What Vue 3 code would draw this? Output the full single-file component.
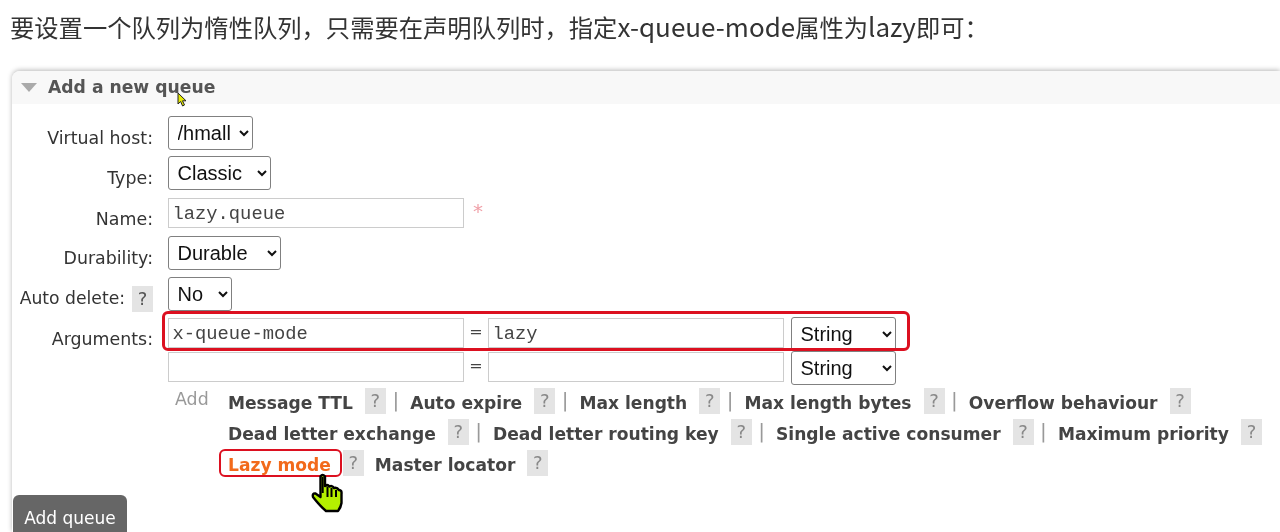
<script setup>
const linkLines = [
  [
    { t: 'Message TTL', sep: true },
    { t: 'Auto expire', sep: true },
    { t: 'Max length', sep: true },
    { t: 'Max length bytes', sep: true },
    { t: 'Overflow behaviour' }
  ],
  [
    { t: 'Dead letter exchange', sep: true },
    { t: 'Dead letter routing key', sep: true },
    { t: 'Single active consumer', sep: true },
    { t: 'Maximum priority' }
  ],
  [
    { t: 'Lazy mode', active: true },
    { t: 'Master locator' }
  ]
]
</script>

<template>
  <div class="page">
    <p class="intro">要设置一个队列为惰性队列，只需要在声明队列时，指定<span class="lat">x-queue-mode</span>属性为<span class="lat">lazy</span>即可：</p>
    <section class="panel">
      <header class="head">
        <span class="tri"></span>
        <h2>Add a new queue</h2>
      </header>
      <form class="form" @submit.prevent>
        <label class="lbl">Virtual host:</label>
        <div><select class="sel w-vh"><option>/hmall</option></select></div>

        <label class="lbl">Type:</label>
        <div><select class="sel w-type"><option>Classic</option></select></div>

        <label class="lbl lbl-in">Name:</label>
        <div class="field">
          <input class="inp" value="lazy.queue" />
          <span class="star">*</span>
        </div>

        <label class="lbl">Durability:</label>
        <div><select class="sel w-dur"><option>Durable</option></select></div>

        <label class="lbl lbl-auto">Auto delete:<span class="q q-auto">?</span></label>
        <div><select class="sel w-no"><option>No</option></select></div>

        <label class="lbl lbl-in">Arguments:</label>
        <div class="args">
          <input class="inp" value="x-queue-mode" />
          <span class="eq">=</span>
          <input class="inp" value="lazy" />
          <select class="sel w-str"><option>String</option></select>
          <span class="redbox"></span>
        </div>

        <span></span>
        <div class="args">
          <input class="inp" />
          <span class="eq">=</span>
          <input class="inp" />
          <select class="sel w-str"><option>String</option></select>
        </div>

        <span></span>
        <div class="adds">
          <span class="add">Add</span>
          <div class="lines">
            <div v-for="(line, i) in linkLines" :key="i" class="line">
              <template v-for="item in line" :key="item.t">
                <span class="link" :class="{ active: item.active }">{{ item.t }}<span v-if="item.active" class="redmini"></span></span>
                <span class="q">?</span>
                <span v-if="item.sep" class="sep">|</span>
              </template>
            </div>
            <svg class="hand" viewBox="0 0 32 40" width="32" height="40">
              <path d="M9.5 24V3.5Q11.5 .5 14 3.5V13Q16.5 11 18.5 13.5Q21 12 23 15Q26 14 28 17Q31 17 30.5 21V30Q30 34 27 38H15Q9 33 2 24Q1 20 4.5 20.5Z" fill="#b4f000" stroke="#000" stroke-width="2.4" stroke-linejoin="round"/>
              <path d="M11.7 4V20M16.500 14V24M20.500 15V24M25 17V24" stroke="#000" stroke-width="2" fill="none"/>
            </svg>
          </div>
        </div>
      </form>
      <button class="submit" type="button">Add queue</button>
      <svg class="arrow" viewBox="0 0 11 15" width="11" height="15">
        <path d="M1 1V12L3.600 9.500L5.600 14L7.500 13L5.500 8.800H9Z" fill="#e4e800" stroke="#222" stroke-width="1"/>
      </svg>
    </section>
  </div>
</template>

<style scoped>
.page {
  position: relative;
  width: 1280px;
  height: 532px;
  overflow: hidden;
  background: #fff;
  filter: blur(0.35px);
}
.intro {
  margin: 0;
  padding: 9px 0 0 10px;
  height: 71px;
  box-sizing: border-box;
  font: 24.3px/34px "Noto Sans CJK SC", "Noto Sans", sans-serif;
  color: #333;
  white-space: nowrap;
}
.lat {
  font-size: 26px;
}
.panel {
  position: relative;
  margin-left: 12px;
  height: 461px;
  border-radius: 8px 0 0 0;
  box-shadow: 0 -1px 5px rgba(0, 0, 0, 0.28);
  background: #fff;
}
.head {
  display: flex;
  align-items: center;
  height: 33px;
  padding-left: 9px;
  background: #f8f8f8;
  border-radius: 8px 0 0 0;
}
.tri {
  width: 0;
  height: 0;
  border-left: 8px solid transparent;
  border-right: 8px solid transparent;
  border-top: 9px solid #aaa;
  margin-right: 11px;
}
h2 {
  margin: 0;
  font: bold 17.2px/1 "DejaVu Sans", sans-serif;
  color: #555;
}
.form {
  display: grid;
  grid-template-columns: 141px 1fr;
  grid-template-rows: 40px 42px 38px 41px 41px 34px 36px auto;
  column-gap: 15px;
  margin-top: 12px;
  font-family: "DejaVu Sans", sans-serif;
}
.lbl {
  font-size: 17.4px;
  line-height: 20px;
  color: #333;
  text-align: right;
  padding-top: 12px;
  white-space: nowrap;
}
.lbl-in {
  padding-top: 11px;
}
.lbl-auto {
  display: flex;
  justify-content: flex-end;
  align-items: flex-start;
  gap: 7px;
  padding-top: 11px;
  font-size: 17.2px;
}
.sel {
  display: block;
  box-sizing: border-box;
  height: 34px;
  padding: 0 2px 0 4.5px;
  font: 20px "Liberation Sans", sans-serif;
  color: #111;
  background: #fff;
  border: 1px solid #808080;
  border-radius: 3px;
}
.w-vh { width: 85px; }
.w-type { width: 103px; }
.w-dur { width: 113px; }
.w-no { width: 64px; }
.w-str { width: 105px; margin-left: 7px; margin-top: -1px; }
.inp {
  display: block;
  box-sizing: border-box;
  width: 296px;
  height: 30px;
  padding: 1px 3.5px 0;
  border: 1px solid #ccc;
  font: 18.8px "Liberation Mono", monospace;
  color: #444;
  background: #fff;
}
.field, .args {
  position: relative;
  display: flex;
  align-items: flex-start;
}
.star {
  margin-left: 9px;
  padding-top: 2px;
  font: 20px/22px "DejaVu Sans", sans-serif;
  color: #f0a0a8;
}
.eq {
  width: 24px;
  text-align: center;
  font-size: 16px;
  line-height: 28px;
  color: #444;
}
.redbox {
  position: absolute;
  left: -6px;
  top: -7px;
  width: 748px;
  height: 40px;
  box-sizing: border-box;
  border: 3px solid #dc1020;
  border-radius: 6px;
}
.adds {
  display: flex;
}
.add {
  width: 60px;
  padding: 0 0 0 7px;
  box-sizing: border-box;
  font-size: 17.4px;
  line-height: 22px;
  color: #999;
}
.lines {
  position: relative;
}
.line {
  display: flex;
  align-items: flex-start;
  height: 31px;
  white-space: nowrap;
}
.link {
  position: relative;
  font-weight: bold;
  font-size: 17.1px;
  line-height: 30px;
  color: #444;
  margin-right: 12px;
}
.link.active {
  color: #f26a1b;
}
.redmini {
  position: absolute;
  left: -9px;
  top: -1px;
  width: 123px;
  height: 27.5px;
  box-sizing: border-box;
  border: 2.5px solid #dc1020;
  border-radius: 6px;
}
.q {
  flex: none;
  display: inline-block;
  width: 21px;
  height: 26px;
  background: #e4e4e4;
  color: #888;
  font-size: 18px;
  font-weight: normal;
  line-height: 26px;
  text-align: center;
}
.q-auto {
  margin-top: -2px;
  color: #555;
}
.line .q {
  margin-right: 11px;
}
.sep {
  flex: none;
  width: 6px;
  margin-left: -4.5px;
  margin-right: 11.8px;
  font-size: 20px;
  line-height: 24px;
  text-align: center;
  color: #999;
}
.hand {
  position: absolute;
  left: 83px;
  top: 85px;
}
.arrow {
  position: absolute;
  left: 165px;
  top: 21px;
}
.submit {
  display: block;
  position: absolute;
  left: 1px;
  top: 424px;
  width: 114px;
  height: 37px;
  padding: 8px 0 0;
  border: 0;
  border-radius: 6px 6px 0 0;
  background: #666;
  color: #fff;
  font: 17px "DejaVu Sans", sans-serif;
}
</style>

<style>
html, body { margin: 0; overflow: hidden; background: #fff; }
</style>
